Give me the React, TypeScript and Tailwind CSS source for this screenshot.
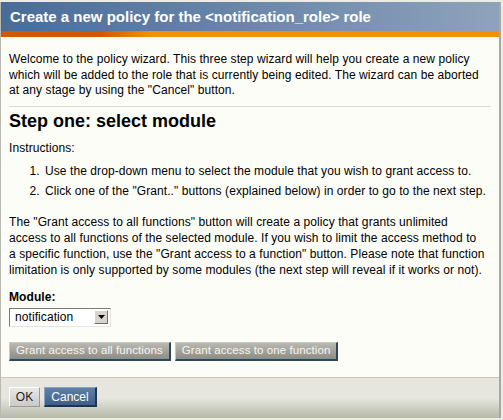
const FONT = { fontFamily: '"Liberation Sans", Arial, sans-serif' };

function GrayButton({ children }: { children: React.ReactNode }) {
  return (
    <button className="h-[19px] px-[6px] text-[11.5px] leading-none text-[#f6f6f2] bg-gradient-to-b from-[#b9b9b1] to-[#8d8d85] border-t border-l border-t-[#c9c9c1] border-l-[#c9c9c1] border-r-2 border-b-2 border-r-[#2e475c] border-b-[#2e475c]">
      {children}
    </button>
  );
}

export default function App() {
  return (
    <div className="w-[503px] h-[420px] bg-[#ecece6] pt-[2px]" style={FONT}>
      <div className="w-[501px] h-[416px] flex flex-col border-l border-[#b9b9b1] border-r-2 border-r-[#a8a8a0] bg-[#fdfdf8]">
        <div className="h-[29px] flex items-center pl-[9px] bg-gradient-to-r from-[#486c98] to-[#8ea3bb]">
          <h1 className="text-white font-bold text-[15px] leading-none">
            Create a new policy for the &lt;notification_role&gt; role
          </h1>
        </div>
        <div className="h-[6px] bg-gradient-to-r from-[#d25700] from-20% to-[#f39200] to-30%" />

        <div className="flex-1 pl-[8px] pr-[4px] pt-[15px] text-[12px] tracking-[0.08px] text-black">
          <p className="leading-[15.5px] whitespace-nowrap">
            Welcome to the policy wizard. This three step wizard will help you create a new policy
            <br />
            which will be added to the role that is currently being edited. The wizard can be aborted
            <br />
            at any stage by using the "Cancel" button.
          </p>
          <div className="mt-[7px] mr-[4px] border-t border-[#dcdcd4]" />
          <h2 className="mt-[3px] text-[18px] font-bold tracking-normal leading-[22px]">Step one: select module</h2>
          <p className="mt-[8px] leading-[16px]">Instructions:</p>
          <ol className="mt-[5px] pl-[34px] list-decimal leading-[20px] whitespace-nowrap">
            <li className="pl-[2px]">Use the drop-down menu to select the module that you wish to grant access to.</li>
            <li className="pl-[2px]">Click one of the "Grant.." buttons (explained below) in order to go to the next step.</li>
          </ol>
          <p className="mt-[13px] leading-[16px] whitespace-nowrap">
            The "Grant access to all functions" button will create a policy that grants unlimited
            <br />
            access to all functions of the selected module. If you wish to limit the access method to
            <br />
            a specific function, use the "Grant access to a function" button. Please note that function
            <br />
            limitation is only supported by some modules (the next step will reveal if it works or not).
          </p>
          <div className="mt-[12px] font-bold leading-[14px]">Module:</div>
          <div className="mt-[4px] w-[102px] h-[19px] flex items-center bg-white border border-t-[#7a7a7a] border-l-[#7a7a7a] border-b-[#e4e4e4] border-r-[#e4e4e4]">
            <span className="flex-1 pl-[5px] text-[12px] leading-none">notification</span>
            <span className="mr-[2px] w-[14px] h-[14px] flex items-center justify-center bg-[#d6d4cc] border border-t-white border-l-white border-b-[#6e6e6e] border-r-[#6e6e6e]">
              <svg width="7" height="4" viewBox="0 0 7 4">
                <path d="M0 0h7L3.5 4z" fill="#000" />
              </svg>
            </span>
          </div>
          <div className="mt-[15px] flex gap-[4px]">
            <GrayButton>Grant access to all functions</GrayButton>
            <GrayButton>Grant access to one function</GrayButton>
          </div>
        </div>

        <div className="h-[41px] border-t border-[#c4c4bc] bg-gradient-to-b from-[#e6e6de] from-50% to-[#b6baa8] px-[8px] pt-[9px] flex gap-[4px] items-start">
          <button className="h-[20px] w-[31px] text-[12px] leading-none text-[#222] bg-gradient-to-b from-[#e8e8e6] to-[#cacac8] border border-t-white border-l-white border-r-[#9a9a98] border-b-[#9a9a98]">
            OK
          </button>
          <button className="h-[20px] w-[53px] text-[12px] leading-none text-white bg-gradient-to-b from-[#5f80a6] to-[#3e5f88] border-t border-l border-t-[#8aa2bf] border-l-[#8aa2bf] border-r-2 border-b-2 border-r-[#1e3450] border-b-[#1e3450]">
            Cancel
          </button>
        </div>
      </div>
    </div>
  );
}
